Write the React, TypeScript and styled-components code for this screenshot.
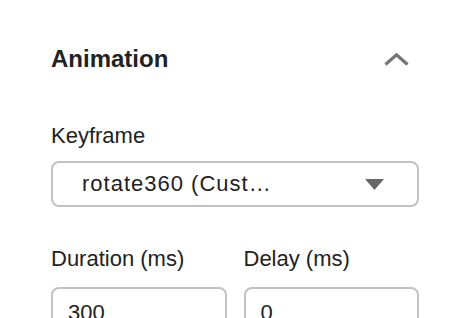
import React from 'react';
import styled, { createGlobalStyle } from 'styled-components';

const GlobalStyle = createGlobalStyle`
    html, body {
        margin: 0;
        padding: 0;
        background: #fff;
    }

    body {
        font-family: 'Liberation Sans', Arial, Helvetica, sans-serif;
        color: #222;
    }
`;

const Panel = styled.div`
    width: 368px;
    padding: 45px 0 0 51px;
`;

const Header = styled.div`
    display: flex;
    align-items: center;
    justify-content: space-between;
    height: 28px;
`;

const Title = styled.h2`
    margin: 0;
    font-size: 24px;
    line-height: 28px;
    font-weight: 700;
    color: #222;
`;

const Toggle = styled.button`
    display: flex;
    align-items: center;
    justify-content: center;
    padding: 0;
    margin-right: 10px;
    border: none;
    background: none;
    cursor: pointer;
`;

const Field = styled.div<{ grow?: boolean; gap: number }>`
    display: flex;
    flex-direction: column;
    gap: ${({ gap }) => gap}px;
    flex: ${({ grow }) => (grow ? 1 : 'none')};
    min-width: 0;
`;

const Section = styled.div<{ top: number }>`
    margin-top: ${({ top }) => top}px;
`;

const Row = styled.div`
    display: flex;
    gap: 17px;
`;

const Label = styled.label`
    font-size: 22px;
    line-height: 26px;
    color: #222;
`;

const Select = styled.div`
    display: flex;
    align-items: center;
    justify-content: space-between;
    box-sizing: border-box;
    height: 46px;
    padding: 0 33px 0 29px;
    border: 2px solid #c2c2c2;
    border-radius: 8px;
    font-size: 22px;
    color: #222;
`;

const SelectText = styled.span`
    white-space: nowrap;
    letter-spacing: 1px;
`;

const Input = styled.div`
    box-sizing: border-box;
    height: 46px;
    padding: 11px 15px 0;
    border: 2px solid #c2c2c2;
    border-radius: 8px;
    font-size: 22px;
    line-height: 26px;
    color: #222;
`;

export default function App() {
    return (
        <>
            <GlobalStyle />
            <Panel>
                <Header>
                    <Title>Animation</Title>
                    <Toggle>
                        <svg width="25" height="13" viewBox="0 0 25 13">
                            <polyline
                                points="1.5,11.5 12.5,1.8 23.5,11.5"
                                fill="none"
                                stroke="#757575"
                                strokeWidth="3.2"
                            />
                        </svg>
                    </Toggle>
                </Header>

                <Section top={50}>
                    <Field gap={12}>
                        <Label>Keyframe</Label>
                        <Select>
                            <SelectText>rotate360 (Cust…</SelectText>
                            <svg width="19" height="11" viewBox="0 0 19 11">
                                <polygon points="0,0 19,0 9.5,11" fill="#666" />
                            </svg>
                        </Select>
                    </Field>
                </Section>

                <Section top={39}>
                    <Row>
                        <Field grow gap={15}>
                            <Label>Duration (ms)</Label>
                            <Input>300</Input>
                        </Field>
                        <Field grow gap={15}>
                            <Label>Delay (ms)</Label>
                            <Input>0</Input>
                        </Field>
                    </Row>
                </Section>
            </Panel>
        </>
    );
}
